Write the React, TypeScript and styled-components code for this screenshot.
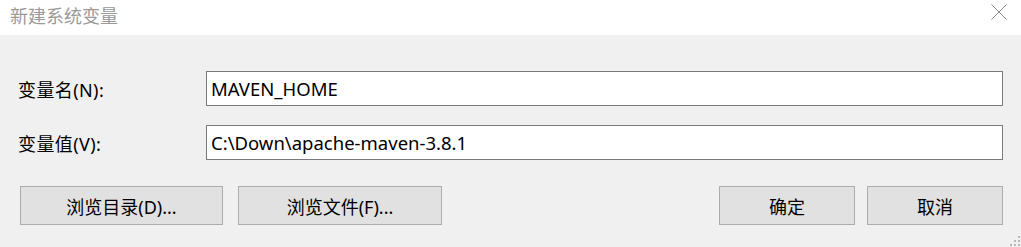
import styled, { createGlobalStyle } from "styled-components";

// Dialog: 新建系统变量 (Windows style)

const GlobalStyle = createGlobalStyle`
    html, body {
        margin: 0;
        padding: 0;
        background: #f0f0f0;
    }
    body {
        font-family: "Noto Sans", "Noto Sans CJK SC", sans-serif;
    }
`;

const Window = styled.div`
    position: relative;
    width: 1021px;
    height: 247px;
    display: flex;
    flex-direction: column;
    background: #f0f0f0;
    overflow: hidden;
`;

const TitleBar = styled.div`
    height: 35px;
    background: #ffffff;
    display: flex;
    align-items: center;
    justify-content: space-between;
    padding: 0 14px 0 10px;
    box-sizing: border-box;
`;

const Title = styled.span`
    font-size: 18px;
    color: #999999;
    margin-top: -6px;
`;

const CloseBtn = styled.button`
    border: none;
    background: transparent;
    padding: 0;
    width: 17px;
    height: 17px;
    margin-top: -11px;
    display: flex;
    align-items: center;
    justify-content: center;
`;

const Body = styled.div`
    flex: 1;
    display: flex;
    flex-direction: column;
    padding: 36px 18px 0 20px;
`;

const Fields = styled.div`
    display: grid;
    grid-template-columns: 186px 1fr;
    row-gap: 19px;
    align-items: center;
`;

const Label = styled.label`
    font-size: 18px;
    letter-spacing: 0.4px;
    color: #000;
    margin-left: -2px;
`;

const Field = styled.div`
    height: 35px;
    box-sizing: border-box;
    border: 1px solid #7a7a7a;
    background: #ffffff;
    display: flex;
    align-items: center;
    padding-left: 4px;
    font-size: 18.5px;
    color: #000;
`;

const ButtonRow = styled.div`
    display: flex;
    justify-content: space-between;
    margin-top: 26px;
`;

const Group = styled.div<{ $gap: number }>`
    display: flex;
    gap: ${(p) => p.$gap}px;
`;

const Button = styled.button<{ $w: number }>`
    width: ${(p) => p.$w}px;
    height: 39px;
    box-sizing: border-box;
    border: 1px solid #adadad;
    background: #e1e1e1;
    font-family: "Noto Sans", "Noto Sans CJK SC", sans-serif;
    font-size: 18px;
    color: #000;
    padding: 0;
`;

const Grip = styled.svg`
    position: absolute;
    right: 1px;
    bottom: 1px;
`;

export default function App() {
    return (
        <>
            <GlobalStyle />
            <Window>
                <TitleBar>
                    <Title>新建系统变量</Title>
                    <CloseBtn>
                        <svg width="16" height="16" viewBox="0 0 16 16">
                            <path d="M0.5 0.5L15.5 15.5M15.5 0.5L0.5 15.5" stroke="#8a8a8a" strokeWidth="1" />
                        </svg>
                    </CloseBtn>
                </TitleBar>
                <Body>
                    <Fields>
                        <Label>变量名(N):</Label>
                        <Field>MAVEN_HOME</Field>
                        <Label>变量值(V):</Label>
                        <Field>C:\Down\apache-maven-3.8.1</Field>
                    </Fields>
                    <ButtonRow>
                        <Group $gap={15}>
                            <Button $w={203}>浏览目录(D)...</Button>
                            <Button $w={204}>浏览文件(F)...</Button>
                        </Group>
                        <Group $gap={12}>
                            <Button $w={136}>确定</Button>
                            <Button $w={136}>取消</Button>
                        </Group>
                    </ButtonRow>
                </Body>
                <Grip width="10" height="10" viewBox="0 0 10 10">
                    <rect x="8" y="0" width="2" height="2" fill="#b8b8b8" />
                    <rect x="4" y="4" width="2" height="2" fill="#b8b8b8" />
                    <rect x="8" y="4" width="2" height="2" fill="#b8b8b8" />
                    <rect x="0" y="8" width="2" height="2" fill="#b8b8b8" />
                    <rect x="4" y="8" width="2" height="2" fill="#b8b8b8" />
                    <rect x="8" y="8" width="2" height="2" fill="#b8b8b8" />
                </Grip>
            </Window>
        </>
    );
}
